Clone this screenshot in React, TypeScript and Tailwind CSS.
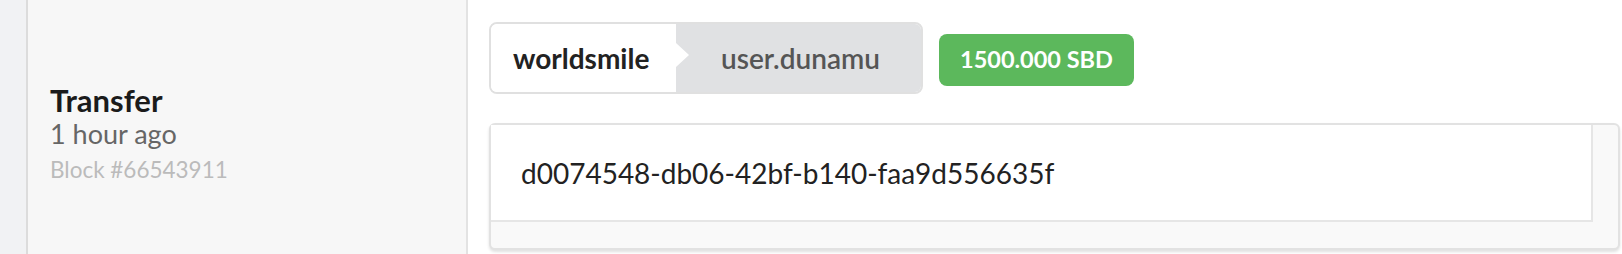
import React from 'react';

const App: React.FC = () => {
  return (
    <div className="flex h-[254px] w-[1622px] overflow-hidden bg-white font-['Lato','Noto_Sans',sans-serif]">
      {/* Left rail */}
      <div className="w-[28px] shrink-0 border-r-2 border-[#dcdcdc] bg-[#f1f2f4]" />

      {/* Operation meta */}
      <div className="w-[440px] shrink-0 border-r-2 border-[#e3e3e3] bg-[#f7f7f7] pl-[22px] pt-[83px]">
        <div className="text-[31px] font-bold leading-[34px] text-[#1b1b1b]">Transfer</div>
        <div className="text-[27px] leading-[34px] text-[#666]">1 hour ago</div>
        <div className="text-[22.5px] leading-[38px] text-[#bbb]">Block #66543911</div>
      </div>

      {/* Operation body */}
      <div className="flex-1 pl-[21px] pr-[2px] pt-[22px]">
        <div className="flex items-start gap-4">
          <div className="flex h-[72px] w-[434px] overflow-hidden rounded-[8px] border-2 border-[#e0e0e0]">
            <div className="relative flex w-[185px] items-center bg-white pl-[22px] text-[28px] font-bold text-[#222]">
              worldsmile
              <span className="absolute right-[-13px] top-[19px] z-10 h-0 w-0 border-y-[12px] border-l-[13px] border-y-transparent border-l-white" />
            </div>
            <div className="flex flex-1 items-center justify-center bg-[#e0e1e3] pl-[4px] text-[28px] font-semibold text-[#555]">
              user.dunamu
            </div>
          </div>
          <div className="mt-[12px] flex h-[52px] items-center rounded-[8px] bg-[#5cb85c] px-[21px] text-[23.5px] font-bold text-white">
            1500.000 SBD
          </div>
        </div>

        <div className="mt-[29px] h-[127px] rounded-[6px] border-2 border-[#e2e2e2] bg-[#f9f9f9] shadow-[0_2px_3px_rgba(0,0,0,0.12)]">
          <div className="mr-[25px] flex h-[97px] items-center border-b-2 border-r-2 border-[#e6e6e6] bg-white pl-[30px] text-[28px] text-[#222]">
            d0074548-db06-42bf-b140-faa9d556635f
          </div>
        </div>
      </div>
    </div>
  );
};

export default App;
